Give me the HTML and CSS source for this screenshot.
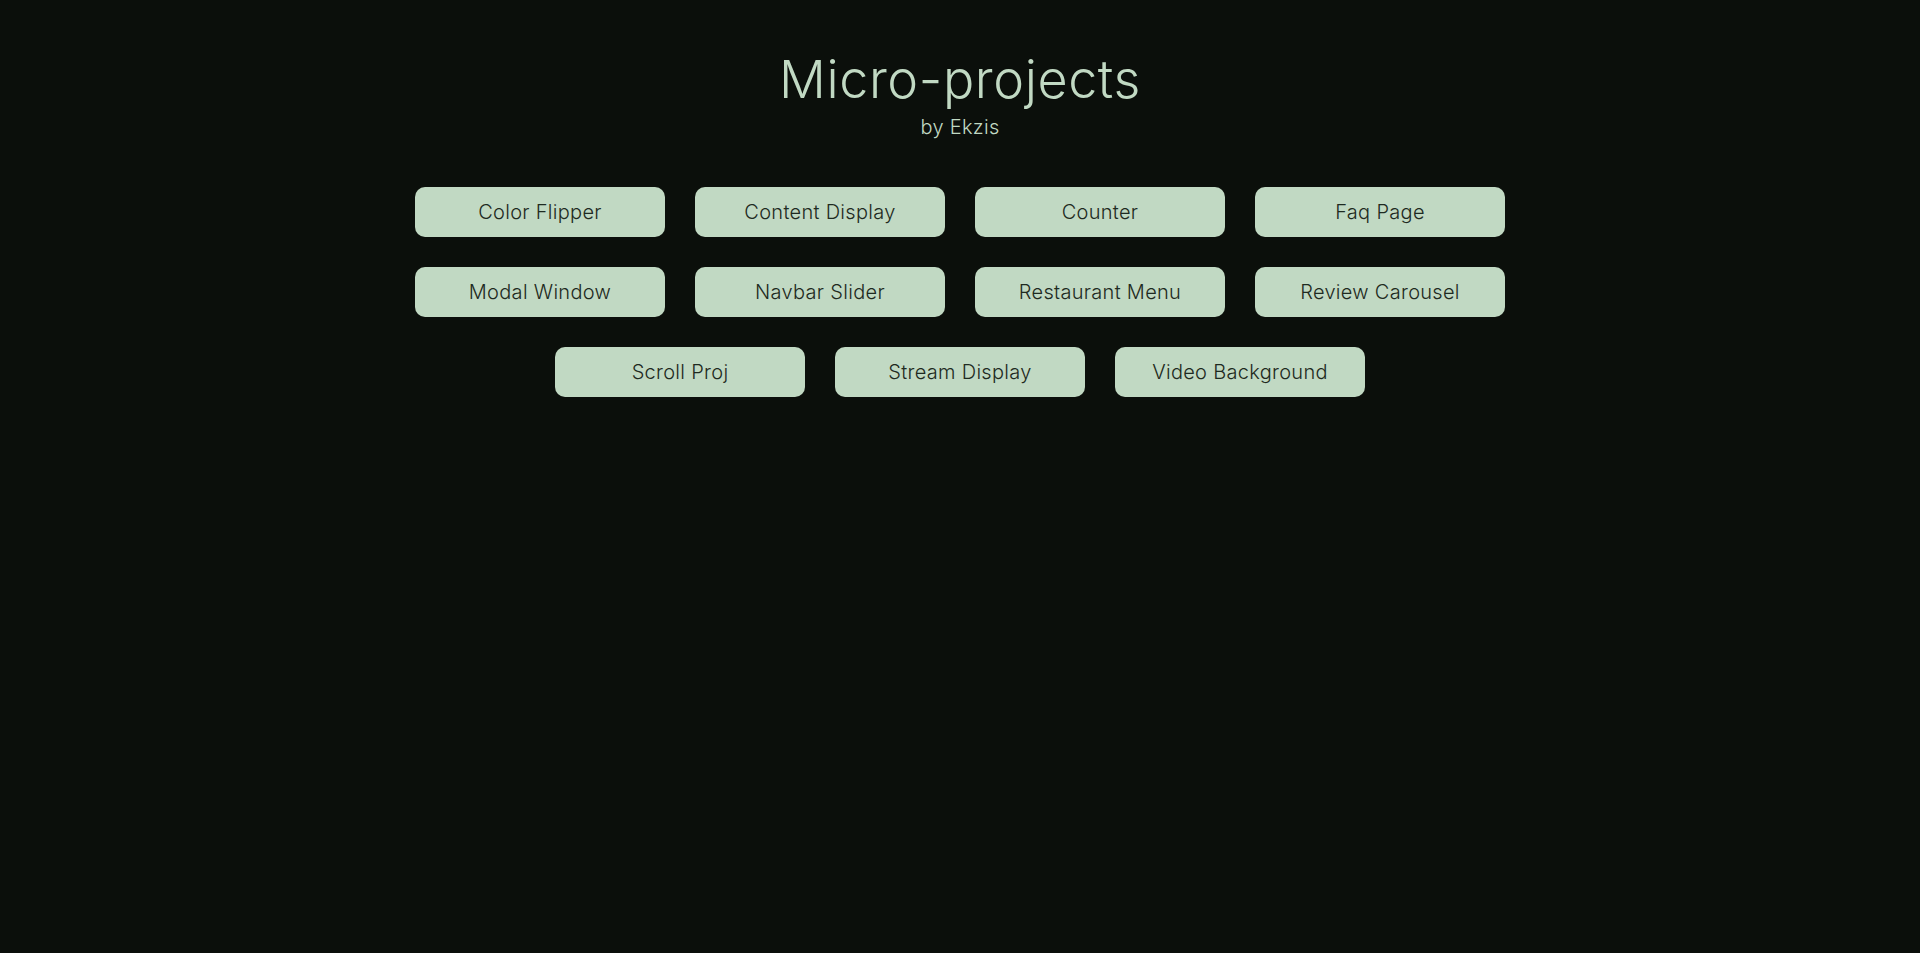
FILE: index.html
```html
<!DOCTYPE html>
<html lang="en">
<head>
<meta charset="utf-8">
<title>Micro-projects</title>
<link rel="stylesheet" href="styles.css">
</head>
<body>
<header class="header">
  <h1 class="title">Micro-projects</h1>
  <p class="subtitle">by Ekzis</p>
</header>
<main class="projects">
  <a class="project" href="#">Color Flipper</a>
  <a class="project" href="#">Content Display</a>
  <a class="project" href="#">Counter</a>
  <a class="project" href="#">Faq Page</a>
  <a class="project" href="#">Modal Window</a>
  <a class="project" href="#">Navbar Slider</a>
  <a class="project" href="#">Restaurant Menu</a>
  <a class="project" href="#">Review Carousel</a>
  <a class="project" href="#">Scroll Proj</a>
  <a class="project" href="#">Stream Display</a>
  <a class="project" href="#">Video Background</a>
</main>
</body>
</html>
```

FILE: styles.css
```css
* { box-sizing: border-box; }
html, body { height: 100%; }
body {
  margin: 0;
  background: #0b0f0b;
  color: #c1d9c3;
  font-family: Inter, "Noto Sans", sans-serif;
}
.header {
  display: flex;
  flex-direction: column;
  align-items: center;
  padding-top: 49px;
}
.title {
  margin: 0;
  font-size: 52px;
  font-weight: 300;
  letter-spacing: 0.6px;
  line-height: 62px;
}
.subtitle {
  margin: 4px 0 0;
  font-size: 20px;
  font-weight: 300;
  letter-spacing: 0.3px;
  line-height: 24px;
}
.projects {
  width: 1090px;
  margin: 48px auto 0;
  display: flex;
  flex-wrap: wrap;
  justify-content: center;
  gap: 30px;
}
.project {
  width: 250px;
  height: 50px;
  display: flex;
  align-items: center;
  justify-content: center;
  background: #c1d9c3;
  color: #1e2a21;
  border-radius: 10px;
  text-decoration: none;
  font-size: 20px;
  font-weight: 300;
  letter-spacing: 0.3px;
}
```
